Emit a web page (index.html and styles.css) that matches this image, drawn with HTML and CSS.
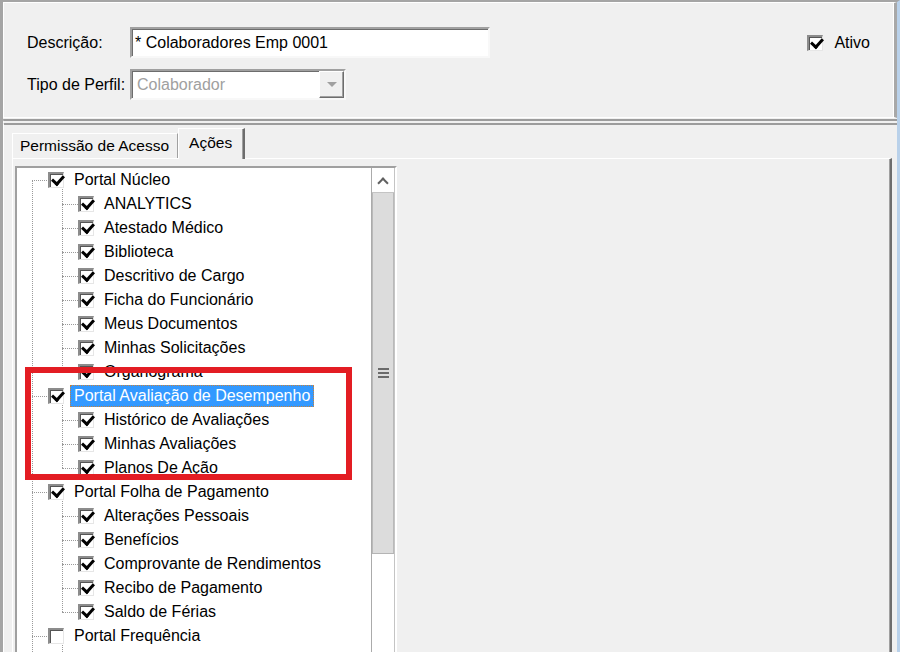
FILE: index.html
```
<!DOCTYPE html>
<html lang="pt-BR">

<head>
    <meta charset="UTF-8">
    <meta name="viewport" content="width=device-width, initial-scale=1.0">
    <title>Perfil de Acesso</title>
    <link rel="stylesheet" href="styles.css">
</head>

<body>
    <div class="window">

        <section class="header-panel">
            <label class="field-label">Descrição:</label>
            <div class="text-input">* Colaboradores Emp 0001</div>
            <label class="ativo"><span class="chk on"></span>Ativo</label>

            <label class="field-label">Tipo de Perfil:</label>
            <div class="combo">
                <span class="combo-text">Colaborador</span>
                <span class="combo-btn"><span class="combo-arrow"></span></span>
            </div>
        </section>

        <section class="main-panel">
            <div class="tabs">
                <div class="tab">Permissão de Acesso</div>
                <div class="tab active">Ações</div>
            </div>

            <div class="tab-page">
                <div class="tree-box">
                    <ul class="tree">
                        <li class="root">
                            <div class="item"><span class="chk on"></span><span class="text">Portal Núcleo</span></div>
                            <ul class="children">
                                <li class="item"><span class="chk on"></span><span class="text">ANALYTICS</span></li>
                                <li class="item"><span class="chk on"></span><span class="text">Atestado Médico</span></li>
                                <li class="item"><span class="chk on"></span><span class="text">Biblioteca</span></li>
                                <li class="item"><span class="chk on"></span><span class="text">Descritivo de Cargo</span></li>
                                <li class="item"><span class="chk on"></span><span class="text">Ficha do Funcionário</span></li>
                                <li class="item"><span class="chk on"></span><span class="text">Meus Documentos</span></li>
                                <li class="item"><span class="chk on"></span><span class="text">Minhas Solicitações</span></li>
                                <li class="item"><span class="chk on"></span><span class="text">Organograma</span></li>
                            </ul>
                        </li>
                        <li class="root">
                            <div class="item"><span class="chk on"></span><span class="text selected">Portal Avaliação de Desempenho</span></div>
                            <ul class="children">
                                <li class="item"><span class="chk on"></span><span class="text">Histórico de Avaliações</span></li>
                                <li class="item"><span class="chk on"></span><span class="text">Minhas Avaliações</span></li>
                                <li class="item"><span class="chk on"></span><span class="text">Planos De Ação</span></li>
                            </ul>
                        </li>
                        <li class="root">
                            <div class="item"><span class="chk on"></span><span class="text">Portal Folha de Pagamento</span></div>
                            <ul class="children">
                                <li class="item"><span class="chk on"></span><span class="text">Alterações Pessoais</span></li>
                                <li class="item"><span class="chk on"></span><span class="text">Benefícios</span></li>
                                <li class="item"><span class="chk on"></span><span class="text">Comprovante de Rendimentos</span></li>
                                <li class="item"><span class="chk on"></span><span class="text">Recibo de Pagamento</span></li>
                                <li class="item"><span class="chk on"></span><span class="text">Saldo de Férias</span></li>
                            </ul>
                        </li>
                        <li class="root">
                            <div class="item"><span class="chk"></span><span class="text">Portal Frequência</span></div>
                            <ul class="children">
                                <li class="item"><span class="chk on"></span><span class="text">Acerto de Frequência</span></li>
                            </ul>
                        </li>
                    </ul>

                    <div class="scrollbar">
                        <div class="scroll-up"><span class="chevron"></span></div>
                        <div class="scroll-thumb">
                            <span class="grip"></span>
                        </div>
                        <div class="scroll-track"></div>
                    </div>
                </div>
            </div>
        </section>

        <!-- marcação em vermelho em volta do portal de avaliação -->
        <div class="mark-box"></div>
    </div>
</body>

</html>
```

FILE: styles.css
```
* {
    margin: 0;
    padding: 0;
    box-sizing: border-box;
}

html,
body {
    width: 900px;
    height: 652px;
    overflow: hidden;
}

body {
    background: #f0f0f0;
    font-family: "Liberation Sans", Arial, sans-serif;
    font-size: 16px;
    color: #000;
}

/* moldura da janela */
.window {
    position: relative;
    width: 900px;
    height: 652px;
    overflow: hidden;
    display: flex;
    flex-direction: column;
    border-top: 2px solid #a5a5a5;
    border-left: 3px solid #a5a5a5;
    border-right: 3px solid #b9d1ea;
}

/* painel de cima: descrição / tipo de perfil */
.header-panel {
    height: 116px;
    flex: none;
    display: grid;
    grid-template-columns: 103px 360px 1fr;
    grid-template-rows: 31px 31px;
    row-gap: 11px;
    align-items: center;
    padding: 24px 0 0 23px;
    border-top: 1px solid #fff;
    border-left: 1px solid #fff;
    border-bottom: 1px solid #fff;
    border-right: 3px solid #a8a8a8;
    box-shadow: inset -1px 0 #fff;
}

.field-label {
    white-space: nowrap;
}

.text-input {
    height: 31px;
    line-height: 27px;
    padding-left: 3px;
    background: #fff;
    border: 2px solid;
    border-color: #a0a0a0 #f8f8f8 #f8f8f8 #a0a0a0;
    box-shadow: inset 1px 1px #6d6d6d;
}

.ativo {
    justify-self: end;
    display: flex;
    align-items: center;
    padding-right: 24px;
}

.ativo .chk {
    margin-right: 11px;
}

.combo {
    width: 216px;
    height: 31px;
    display: flex;
    align-items: center;
    background: #fff;
    border: 2px solid;
    border-color: #a0a0a0 #f8f8f8 #f8f8f8 #a0a0a0;
    box-shadow: inset 1px 1px #6d6d6d;
}

.combo-text {
    flex: 1;
    padding-left: 5px;
    color: #a0a0a0;
}

.combo-btn {
    width: 25px;
    height: 27px;
    display: flex;
    align-items: center;
    justify-content: center;
    background: #f0f0f0;
    border: 1px solid;
    border-color: #fff #6d6d6d #6d6d6d #fff;
    box-shadow: inset -1px -1px #a0a0a0;
}

.combo-arrow {
    width: 0;
    height: 0;
    border-left: 5px solid transparent;
    border-right: 5px solid transparent;
    border-top: 5px solid #a0a0a0;
}

/* painel de baixo com as abas */
.main-panel {
    flex: 1;
    min-height: 0;
    margin-top: 1px;
    padding: 3px 5px 0 8px;
    border-top: 6px double #9c9c9c;
    border-left: 1px solid #fff;
    display: flex;
    flex-direction: column;
}

.tabs {
    display: flex;
    align-items: flex-end;
    height: 30px;
    flex: none;
}

.tab {
    height: 25px;
    line-height: 24px;
    padding: 0 8px 0 7px;
    font-size: 15.5px;
    border-top: 1px solid #fff;
    border-left: 1px solid #fff;
    border-right: 1px solid #a0a0a0;
}

.tab.active {
    position: relative;
    z-index: 1;
    height: 31px;
    margin-bottom: -1px;
    line-height: 27px;
    padding: 0 11px 0 10px;
    border-right: 2px solid #6d6d6d;
    box-shadow: inset -1px 0 #a0a0a0;
    background: #f0f0f0;
}

.tab-page {
    flex: 1;
    min-height: 0;
    padding: 7px 0 0 2px;
    border-top: 1px solid #fff;
    border-left: 1px solid #fff;
    border-right: 2px solid #6d6d6d;
    box-shadow: inset -1px 0 #a0a0a0;
}

.tree-box {
    width: 382px;
    height: 520px;
    display: flex;
    border: 2px solid;
    border-color: #a0a0a0 #fff #fff #a0a0a0;
    box-shadow: inset 1px 1px #6d6d6d, inset -1px -1px #e3e3e3;
}

/* árvore de permissões */
.tree {
    position: relative;
    flex: 1;
    list-style: none;
    background: #fff;
    overflow: hidden;
}

.tree::before {
    content: '';
    position: absolute;
    left: 15px;
    top: 12px;
    bottom: 0;
    border-left: 1px dotted #9a9a9a;
}

.tree ul {
    list-style: none;
}

.item {
    position: relative;
    height: 24px;
    display: flex;
    align-items: center;
    padding-left: 31px;
    white-space: nowrap;
}

.item::before {
    content: '';
    position: absolute;
    left: 15px;
    top: 12px;
    width: 15px;
    border-top: 1px dotted #9a9a9a;
}

.children {
    position: relative;
}

.children::before {
    content: '';
    position: absolute;
    left: 45px;
    top: -3px;
    bottom: 12px;
    border-left: 1px dotted #9a9a9a;
}

.children .item {
    padding-left: 61px;
}

.children .item::before {
    left: 45px;
    width: 16px;
}

.text {
    height: 22px;
    line-height: 20px;
    margin-left: 6px;
    padding: 0 3px;
    border: 1px solid transparent;
}

.text.selected {
    background: #3399ff;
    color: #fff;
    border: 1px dotted #c8823c;
}

/* caixa de seleção no estilo clássico */
.chk {
    position: relative;
    display: inline-block;
    flex: none;
    width: 16px;
    height: 16px;
    background: #fff;
    border-top: 2px solid #8c8c8c;
    border-left: 2px solid #8c8c8c;
    border-right: 1px solid #e6e6e6;
    border-bottom: 1px solid #e6e6e6;
    box-shadow: inset 1px 1px #555;
}

.chk.on::after {
    content: '';
    position: absolute;
    left: 4px;
    top: -1px;
    width: 5px;
    height: 9px;
    border-right: 3px solid #000;
    border-bottom: 3px solid #000;
    transform: rotate(42deg);
}

/* barra de rolagem */
.scrollbar {
    width: 24px;
    display: flex;
    flex-direction: column;
    background: #fff;
    border-left: 1px solid #ababab;
    border-right: 1px solid #c4c4c4;
}

.scroll-up {
    height: 25px;
    display: flex;
    align-items: center;
    justify-content: center;
    border-bottom: 1px solid #c4c4c4;
}

.chevron {
    width: 8px;
    height: 8px;
    margin-top: 5px;
    border-left: 2px solid #606060;
    border-top: 2px solid #606060;
    transform: rotate(45deg);
}

.scroll-thumb {
    height: 361px;
    display: flex;
    align-items: center;
    justify-content: center;
    background: #dcdcdc;
    border-bottom: 1px solid #b4b4b4;
    box-shadow: inset 1px 0 #b9b9b9, inset -1px 0 #b9b9b9;
}

.grip {
    width: 11px;
    height: 10px;
    border-top: 2px solid #6a6a6a;
    border-bottom: 2px solid #6a6a6a;
    background: linear-gradient(#dcdcdc 2px, #6a6a6a 2px, #6a6a6a 4px, #dcdcdc 4px);
}

.scroll-track {
    flex: 1;
    background: #fff;
}

.mark-box {
    position: absolute;
    left: 22px;
    top: 365px;
    width: 327px;
    height: 113px;
    border: 6px solid #e31d23;
    z-index: 5;
    pointer-events: none;
}
```
